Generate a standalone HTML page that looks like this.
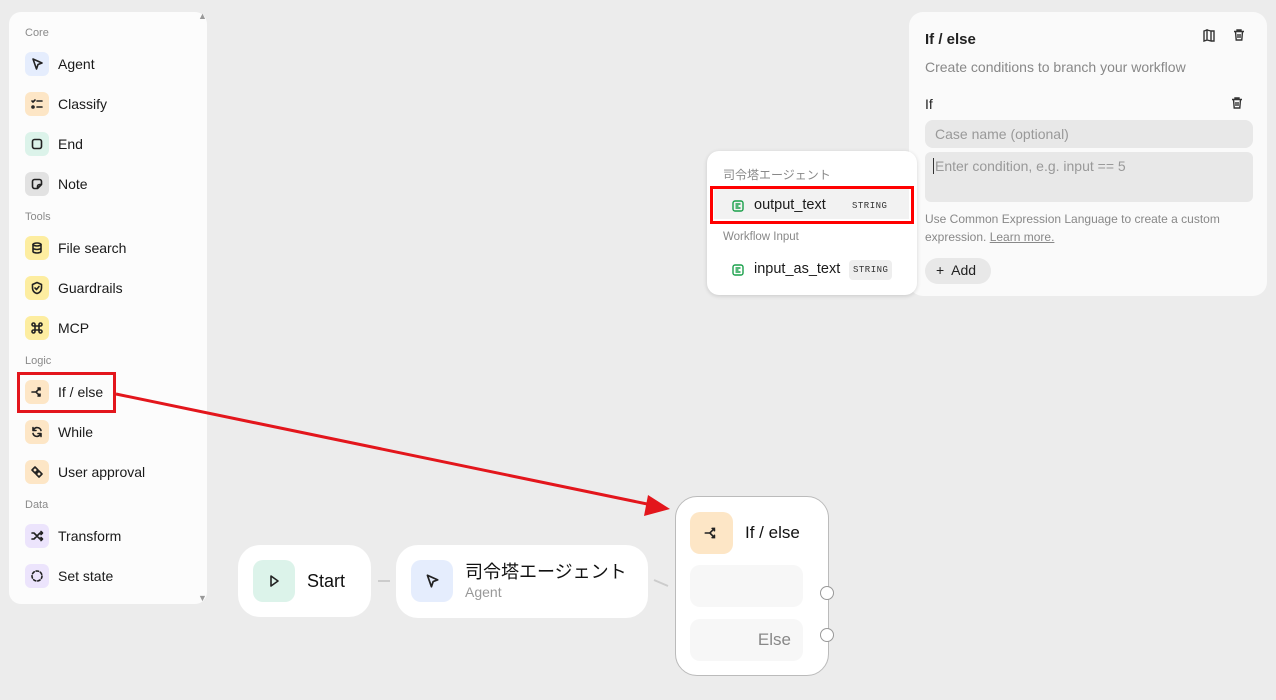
<!DOCTYPE html>
<html><head><meta charset="utf-8"><style>
*{box-sizing:border-box;margin:0;padding:0}
body{width:1276px;height:700px;background:#ececec;font-family:"Liberation Sans","Noto Sans CJK JP",sans-serif;position:relative;overflow:hidden;color:#111}
.abs{position:absolute}
.side{left:9px;top:12px;width:198px;height:592px;background:#fcfcfc;border-radius:12px}
.sec{position:absolute;left:25px;font-size:11px;color:#8a8a8a}
.it{position:absolute;left:25px;height:24px;display:flex;align-items:center;font-size:14px;color:#1a1a1a}
.ic{width:24px;height:24px;border-radius:6px;margin-right:9px;display:flex;align-items:center;justify-content:center}
.ic svg{width:14px;height:14px;fill:none;stroke:#222;stroke-width:1.6;stroke-linecap:round;stroke-linejoin:round}
.blue{background:#e5edfd}.org{background:#fde6c6}.grn{background:#dcf3ea}.gry{background:#e2e2e2}.yel{background:#fdeda0}.pur{background:#ece4fc}
.panel{left:909px;top:12px;width:358px;height:284px;background:#fafafa;border-radius:14px}
.pop{left:707px;top:151px;width:210px;height:144px;background:#fff;border-radius:12px;box-shadow:0 1px 4px rgba(0,0,0,.15)}
.node{background:#fff;border-radius:22px}
.tag{font-family:"Liberation Mono",monospace;font-size:9px;color:#333;background:#eee;border-radius:4px;padding:5px 4px;letter-spacing:.5px}
</style></head><body>
<div class="abs side"></div>
<div class="abs" style="left:198px;top:11px;font-size:9px;color:#999">▲</div>
<div class="abs" style="left:198px;top:593px;font-size:9px;color:#999">▼</div>
<div class="sec" style="top:27px">Core</div>
<div class="it" style="top:52px"><div class="ic blue"><svg viewBox="0 0 14 14"><path d="M3 2 L12 6 L8 7.5 L6.5 12 Z"/></svg></div>Agent</div>
<div class="it" style="top:92px"><div class="ic org"><svg viewBox="0 0 14 14"><path d="M2 4l1 1 2-2M7 4h5M7 10h5"/><circle cx="3" cy="10" r="1"/></svg></div>Classify</div>
<div class="it" style="top:132px"><div class="ic grn"><svg viewBox="0 0 14 14"><rect x="2.5" y="2.5" width="9" height="9" rx="2"/></svg></div>End</div>
<div class="it" style="top:172px"><div class="ic gry"><svg viewBox="0 0 14 14"><path d="M2.5 4.5a2 2 0 0 1 2-2h5a2 2 0 0 1 2 2v3l-4 4h-3a2 2 0 0 1-2-2z M11.5 7.5h-2a2 2 0 0 0-2 2v2"/></svg></div>Note</div>
<div class="sec" style="top:211px">Tools</div>
<div class="it" style="top:236px"><div class="ic yel"><svg viewBox="0 0 14 14"><ellipse cx="7" cy="3.5" rx="4" ry="1.5"/><path d="M3 3.5v7c0 .8 1.8 1.5 4 1.5s4-.7 4-1.5v-7M3 7c0 .8 1.8 1.5 4 1.5s4-.7 4-1.5"/></svg></div>File search</div>
<div class="it" style="top:276px"><div class="ic yel"><svg viewBox="0 0 14 14"><path d="M7 1.5l4.5 2v3.5c0 3-2.2 4.8-4.5 5.5C4.7 11.8 2.5 10 2.5 7V3.5z M5 7l1.5 1.5L9 5.5"/></svg></div>Guardrails</div>
<div class="it" style="top:316px"><div class="ic yel"><svg viewBox="0 0 14 14"><path d="M5 5V3.5a1.5 1.5 0 1 0-1.5 1.5H10.5A1.5 1.5 0 1 0 9 3.5V10.5A1.5 1.5 0 1 0 10.5 9H3.5A1.5 1.5 0 1 0 5 10.5z"/></svg></div>MCP</div>
<div class="sec" style="top:355px">Logic</div>
<div class="it" style="top:380px"><div class="ic org"><svg viewBox="0 0 14 14"><path d="M2 7h4l4-4M8 3h2v2M6 7l4 4M10 9v2H8"/></svg></div>If / else</div>
<div class="it" style="top:420px"><div class="ic org"><svg viewBox="0 0 14 14"><path d="M11 5.5A4 4 0 0 0 3.5 5M3 8.5A4 4 0 0 0 10.5 9M3 2.5v3h3M11 11.5v-3H8"/></svg></div>While</div>
<div class="it" style="top:460px"><div class="ic org"><svg viewBox="0 0 14 14"><path d="M5 2l3 3-3 3-3-3zM9 6l3 3-3 3-3-3z"/></svg></div>User approval</div>
<div class="sec" style="top:499px">Data</div>
<div class="it" style="top:524px"><div class="ic pur"><svg viewBox="0 0 14 14"><path d="M2 4h2l6 6h2M2 10h2l6-6h2M11 2.5l1.5 1.5L11 5.5M11 8.5l1.5 1.5L11 11.5"/></svg></div>Transform</div>
<div class="it" style="top:564px"><div class="ic pur"><svg viewBox="0 0 14 14"><circle cx="7" cy="7" r="5" stroke-dasharray="2.5 2"/></svg></div>Set state</div>
<div class="abs" style="left:17px;top:372px;width:99px;height:41px;border:3px solid #e3161c"></div>

<!-- right panel -->
<div class="abs panel"></div>
<div class="abs" style="left:925px;top:31px;font-size:15px;font-weight:bold;color:#222">If / else</div>
<div class="abs" style="left:925px;top:59px;font-size:14px;color:#888">Create conditions to branch your workflow</div>
<svg class="abs" style="left:1202px;top:28px" width="14" height="14" viewBox="0 0 14 14" fill="none" stroke="#333" stroke-width="1.4"><path d="M2 3l3-1v10l-3 1zM5 2l4 1v10l-4-1zM9 3h3v10H9"/></svg>
<svg class="abs" style="left:1232px;top:28px" width="14" height="14" viewBox="0 0 14 14" fill="none" stroke="#333" stroke-width="1.4"><path d="M2 3.5h10M5 3.5V2h4v1.5M3.5 3.5l.7 8.5h5.6l.7-8.5M6 6v4M8 6v4"/></svg>
<div class="abs" style="left:925px;top:96px;font-size:14px;color:#222">If</div>
<svg class="abs" style="left:1230px;top:96px" width="14" height="14" viewBox="0 0 14 14" fill="none" stroke="#333" stroke-width="1.4"><path d="M2 3.5h10M5 3.5V2h4v1.5M3.5 3.5l.7 8.5h5.6l.7-8.5M6 6v4M8 6v4"/></svg>
<div class="abs" style="left:925px;top:120px;width:328px;height:28px;background:#e8e8e8;border-radius:8px;font-size:14px;color:#999;padding:6px 10px">Case name (optional)</div>
<div class="abs" style="left:925px;top:152px;width:328px;height:50px;background:#e8e8e8;border-radius:6px;font-size:14px;color:#999;padding:6px 8px"><span style="border-left:1px solid #333;padding-left:1px">Enter condition, e.g. input == 5</span></div>
<div class="abs" style="left:925px;top:210px;width:330px;font-size:12px;line-height:18px;color:#888">Use Common Expression Language to create a custom expression. <u>Learn more.</u></div>
<div class="abs" style="left:925px;top:258px;width:66px;height:26px;background:#e8e8e8;border-radius:13px;font-size:14px;color:#222;padding:4px 11px">+&nbsp; Add</div>

<!-- popup -->
<div class="abs pop"></div>
<div class="abs" style="left:723px;top:166px;font-size:12px;color:#888">司令塔エージェント</div>
<div class="abs" style="left:714px;top:189px;width:195px;height:30px;background:#f2f2f2"></div>
<div class="abs" style="left:710px;top:186px;width:204px;height:38px;border:3px solid #f00"></div>
<svg class="abs" style="left:731px;top:199px" width="14" height="14" viewBox="0 0 14 14" fill="none" stroke="#1aa04a" stroke-width="1.4"><rect x="2" y="2" width="10" height="10" rx="2"/><path d="M4.5 5h5M4.5 7h3M4.5 9h5"/></svg>
<div class="abs" style="left:754px;top:197px;font-size:14.5px;color:#1a1a1a">output_text</div>
<div class="abs tag" style="left:848px;top:196px;background:none">STRING</div>
<div class="abs" style="left:723px;top:231px;font-size:11.5px;color:#888">Workflow Input</div>
<svg class="abs" style="left:731px;top:263px" width="14" height="14" viewBox="0 0 14 14" fill="none" stroke="#1aa04a" stroke-width="1.4"><rect x="2" y="2" width="10" height="10" rx="2"/><path d="M4.5 5h5M4.5 7h3M4.5 9h5"/></svg>
<div class="abs" style="left:754px;top:261px;font-size:14.5px;color:#1a1a1a">input_as_text</div>
<div class="abs tag" style="left:849px;top:260px">STRING</div>

<!-- nodes -->
<div class="abs node" style="left:238px;top:545px;width:133px;height:72px"></div>
<div class="abs" style="left:253px;top:560px;width:42px;height:42px;border-radius:10px;background:#dcf3ea"></div>
<svg class="abs" style="left:266px;top:573px" width="16" height="16" viewBox="0 0 16 16" fill="none" stroke="#222" stroke-width="1.6" stroke-linejoin="round"><path d="M5 3l7 5-7 5z"/></svg>
<div class="abs" style="left:307px;top:571px;font-size:18px;color:#111">Start</div>
<div class="abs" style="left:378px;top:580px;width:12px;height:2px;background:#ccc"></div>
<div class="abs node" style="left:396px;top:545px;width:252px;height:73px"></div>
<div class="abs" style="left:411px;top:560px;width:42px;height:42px;border-radius:10px;background:#e5edfd"></div>
<svg class="abs" style="left:424px;top:573px" width="16" height="16" viewBox="0 0 14 14" fill="none" stroke="#222" stroke-width="1.5" stroke-linejoin="round"><path d="M3 2 L12 6 L8 7.5 L6.5 12 Z"/></svg>
<div class="abs" style="left:465px;top:558px;font-size:18px;color:#111">司令塔エージェント</div>
<div class="abs" style="left:465px;top:584px;font-size:14px;color:#999">Agent</div>
<svg class="abs" style="left:652px;top:578px" width="20" height="10"><path d="M2 2l14 6" stroke="#ccc" stroke-width="2"/></svg>
<div class="abs" style="left:675px;top:496px;width:154px;height:180px;background:#fff;border:1.5px solid #bbb;border-radius:22px"></div>
<div class="abs" style="left:690px;top:512px;width:43px;height:42px;border-radius:10px;background:#fde6c6"></div>
<svg class="abs" style="left:703px;top:525px" width="16" height="16" viewBox="0 0 14 14" fill="none" stroke="#222" stroke-width="1.4" stroke-linecap="round"><path d="M2 7h4l4-4M8 3h2v2M6 7l4 4M10 9v2H8"/></svg>
<div class="abs" style="left:745px;top:523px;font-size:17px;color:#111">If / else</div>
<div class="abs" style="left:690px;top:565px;width:113px;height:42px;border-radius:10px;background:#f7f7f7"></div>
<div class="abs" style="left:690px;top:619px;width:113px;height:42px;border-radius:10px;background:#f7f7f7;font-size:17px;color:#888;text-align:right;padding:11px 12px">Else</div>
<div class="abs" style="left:820px;top:586px;width:14px;height:14px;border-radius:50%;background:#fff;border:1.3px solid #999"></div>
<div class="abs" style="left:820px;top:628px;width:14px;height:14px;border-radius:50%;background:#fff;border:1.3px solid #999"></div>

<!-- arrow -->
<svg class="abs" style="left:0;top:0" width="1276" height="700"><line x1="116" y1="394" x2="652" y2="505" stroke="#e3161c" stroke-width="3"/><polygon points="670,509 648,495 644,516" fill="#e3161c"/></svg>
</body></html>
